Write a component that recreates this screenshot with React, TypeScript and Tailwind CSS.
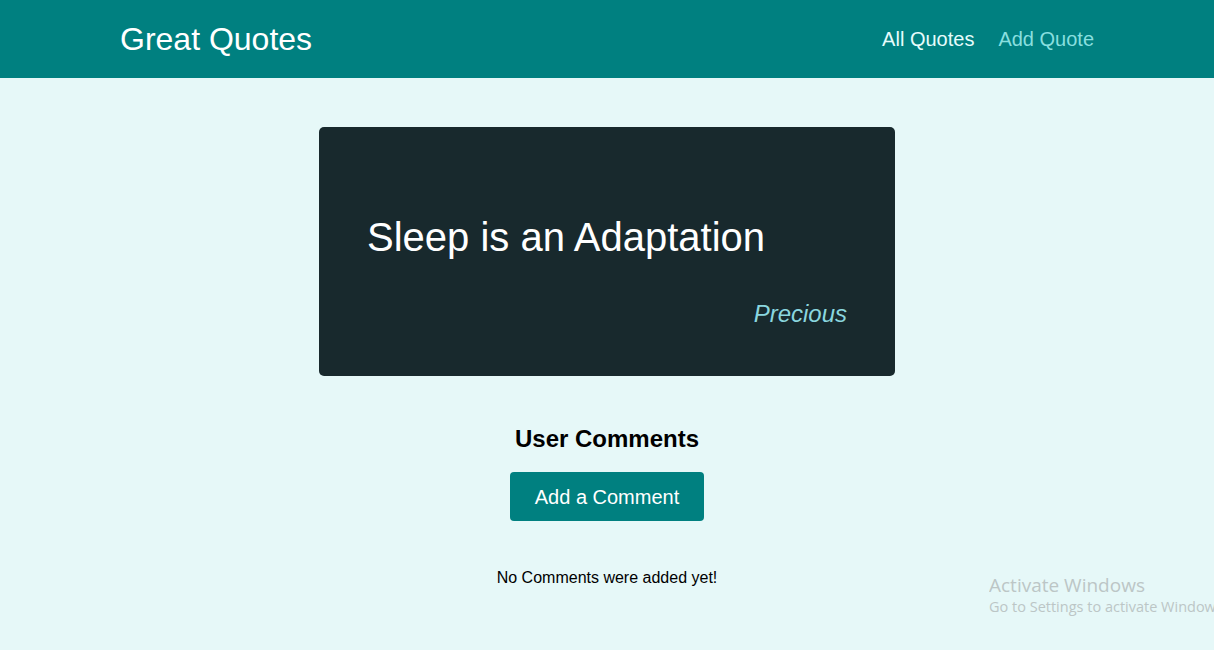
export default function App() {
  return (
    <div className="relative min-h-[650px] overflow-hidden bg-[#e6f8f8] font-['Liberation_Sans',Arial,sans-serif]">
      <header className="flex h-[78px] items-center justify-between bg-[#008080] px-[120px]">
        <div className="text-[32px] leading-none text-white">Great Quotes</div>
        <nav>
          <ul className="flex items-center gap-6 text-xl">
            <li>
              <a className="text-[#e6fcfc]">All Quotes</a>
            </li>
            <li>
              <a className="text-[#88dfdf]">Add Quote</a>
            </li>
          </ul>
        </nav>
      </header>

      <main className="flex flex-col items-center">
        <figure className="mt-[49px] w-[576px] rounded-[5px] bg-[#18292d] px-12 pt-[87px] pb-[48px] text-white">
          <p className="text-[40px] leading-[46px]">Sleep is an Adaptation</p>
          <figcaption className="mt-10 text-right text-2xl leading-7 text-[#8ad6df] italic">
            Precious
          </figcaption>
        </figure>

        <section className="mt-[49px] flex flex-col items-center">
          <h2 className="text-2xl leading-7 font-bold text-black">User Comments</h2>
          <button className="mt-[19px] h-[49px] rounded bg-[#008080] px-[25px] text-xl text-white">
            Add a Comment
          </button>
          <p className="mt-[48px] text-base leading-[18px] text-black">No Comments were added yet!</p>
        </section>
      </main>

      <div className="pointer-events-none absolute top-[573px] right-0 left-[989px] overflow-hidden whitespace-nowrap text-[#bcc6c6] font-['Open_Sans',sans-serif]">
        <div className="text-[19px] leading-6">Activate Windows</div>
        <div className="text-[14.5px] leading-5">Go to Settings to activate Windows.</div>
      </div>
    </div>
  )
}
